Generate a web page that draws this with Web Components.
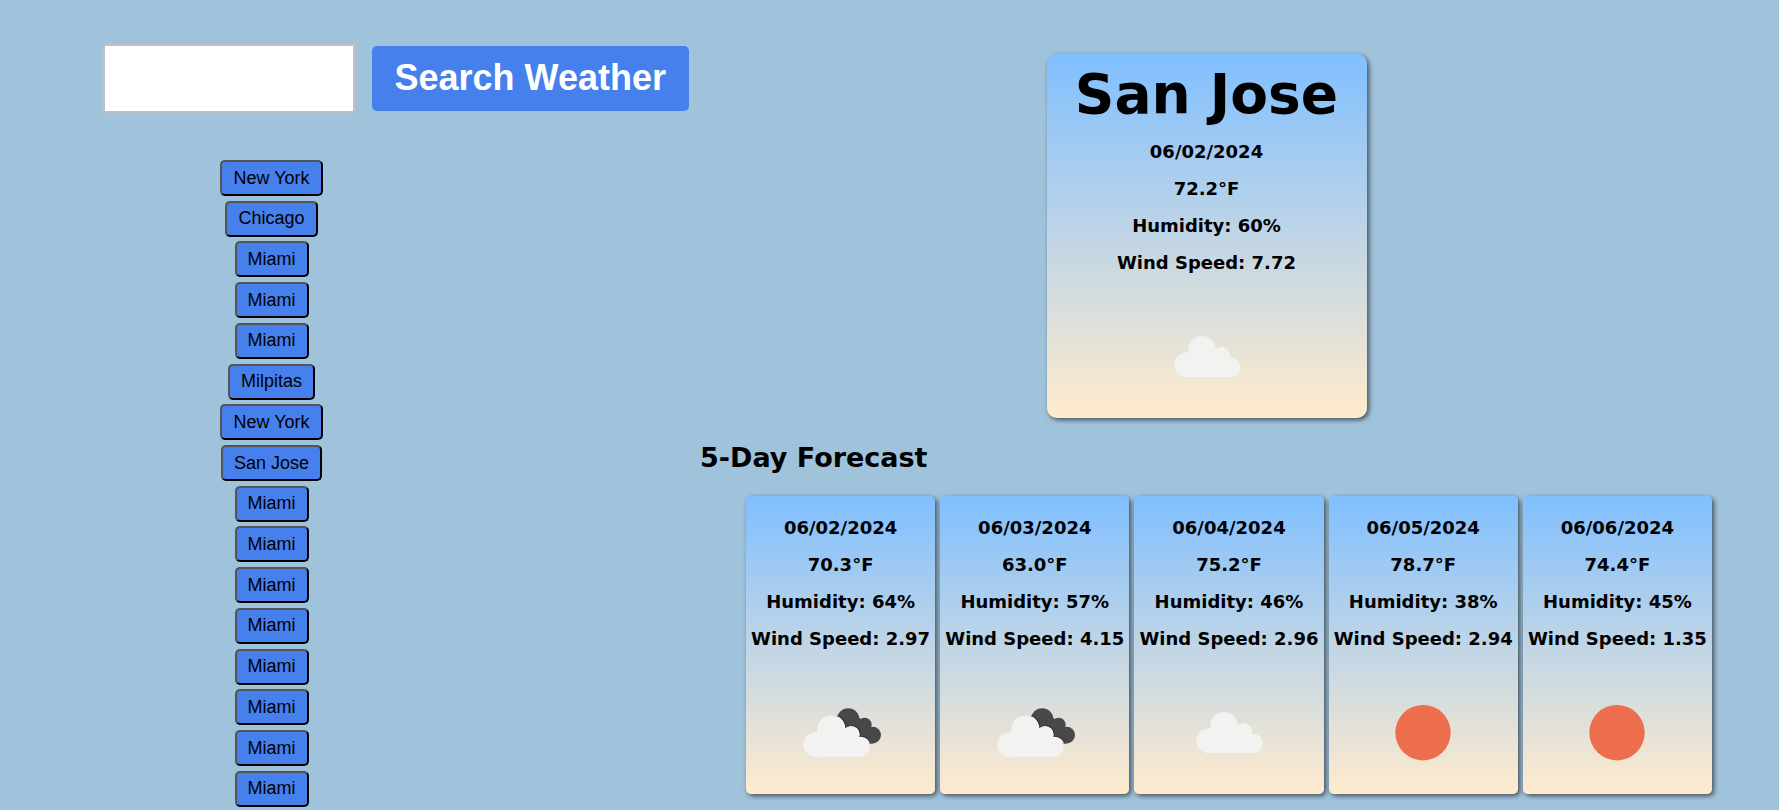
<!DOCTYPE html>
<html lang="en">
<head>
<meta charset="utf-8">
<meta name="viewport" content="width=device-width, initial-scale=1">
<title>Weather Dashboard</title>
<style>
  body { margin: 0; background: #a0c3dc; color: #000; font-family: Verdana, "DejaVu Sans", sans-serif; }
</style>
</head>
<body>
<weather-app></weather-app>
<script>
const CLOUD = `<circle cx="29.7" cy="57.8" r="12.3"/><circle cx="45" cy="42.8" r="13.8"/>
  <circle cx="64.5" cy="48.6" r="8.6"/><circle cx="74" cy="60.4" r="9.7"/>
  <path d="M29.7 70.1V50L45 42.8L64.5 46L70 55L74 60V70.1Z"/>`;
const DARK = `<circle cx="57.2" cy="36.4" r="11.2"/><circle cx="73.6" cy="41.8" r="7.1"/>
  <circle cx="81.7" cy="52.1" r="8.3"/><path d="M57 60.4V40L66 33L72 38L78 46L82 60.4Z"/>`;
const ICONS = {
  cloud: `<g fill="#f2f2f0">${CLOUD}</g>`,
  clouds: `<defs><clipPath id="back">${DARK}</clipPath></defs><g fill="#484849">${DARK}</g>
    <g clip-path="url(#back)"><g fill="#303031" transform="translate(-3.6 2.2)">${CLOUD}</g>
    <g fill="#fff" transform="translate(-4.4 3)">${CLOUD}</g></g>
    <g fill="#f2f2f0" transform="translate(-5 3.7)">${CLOUD}</g>`,
  sun: `<circle cx="50" cy="49.7" r="27.7" fill="#ec6e4c"/>`
};

function define(name, render) {
  customElements.define(name, class extends HTMLElement {
    connectedCallback() {
      if (this.shadowRoot) return;
      this.attachShadow({ mode: "open" }).innerHTML = render(this);
    }
  });
}

define("weather-icon", el => `<style>
  :host { display: block; width: 100px; height: 100px; }
  svg { display: block; width: 100%; height: 100%; }
</style>
<svg viewBox="0 0 100 100" role="img" aria-label="${el.getAttribute("kind")}">${ICONS[el.getAttribute("kind")]}</svg>`);

define("weather-card", el => `<style>
  :host { display: flex; flex-direction: column; align-items: center; box-sizing: border-box;
    padding: 13px 0 11px; border-radius: 5px;
    background: linear-gradient(#80bfff, #ffebcd); box-shadow: 2px 2px 5px rgba(0, 0, 0, .6); }
  :host([large]) { width: 320px; padding-top: 8px; border-radius: 10px; }
  p { margin: 0; font-size: 18px; line-height: 37px; font-weight: bold; white-space: nowrap; }
  weather-icon { margin-top: 26px; }
</style>
<slot></slot>
<p>${el.getAttribute("date")}</p>
<p>${el.getAttribute("temp")}°F</p>
<p>Humidity: ${el.getAttribute("humidity")}%</p>
<p>Wind Speed: ${el.getAttribute("wind")}</p>
<weather-icon kind="${el.getAttribute("icon")}"></weather-icon>`);

define("search-form", () => `<style>
  :host { display: block; }
  form { display: flex; align-items: center; gap: 17px; }
  input { box-sizing: border-box; flex: 1; min-width: 0; height: 69px; padding: 10px; margin: 0;
    border: 2px solid #c0c0c0; background: #fff; font: 36px "Liberation Sans", Arial, sans-serif; }
  button { height: 65px; margin: 0; padding: 0 23px 2px; border: 0; border-radius: 5px; background: #4580ed; color: #fff;
    font: bold 36px "Liberation Sans", Arial, sans-serif; }
</style>
<form onsubmit="return false"><input type="text" aria-label="City"><button type="submit">Search Weather</button></form>`);

define("city-button", () => `<style>
  :host { display: block; }
  button { display: block; height: 36px; margin: 0; padding: 0 11px; border: 2px outset #000; border-radius: 5px;
    background: #4580ed; color: #000; font: 18px "Liberation Sans", Arial, sans-serif; }
</style>
<button type="button"><slot></slot></button>`);

define("search-history", () => `<style>
  :host { display: flex; flex-direction: column; align-items: center; justify-content: space-between; }
</style>
<slot></slot>`);

define("five-day-forecast", () => `<style>
  :host { display: block; }
  h2 { margin: 0; font-size: 27px; line-height: 34px; }
  .days { display: grid; grid-template-columns: repeat(5, minmax(0, 1fr)); gap: 5px; padding: 0 1px 0 46px; margin-top: 21px; }
  @media (max-width: 1700px) {
    .days { grid-template-columns: repeat(auto-fit, minmax(189px, 1fr)); }
  }
</style>
<h2>5-Day Forecast</h2>
<div class="days"><slot></slot></div>`);

const cities = ["New York", "Chicago", "Miami", "Miami", "Miami", "Milpitas", "New York", "San Jose",
  "Miami", "Miami", "Miami", "Miami", "Miami", "Miami", "Miami", "Miami"];
const days = [
  ["06/02/2024", "70.3", 64, "2.97", "clouds"],
  ["06/03/2024", "63.0", 57, "4.15", "clouds"],
  ["06/04/2024", "75.2", 46, "2.96", "cloud"],
  ["06/05/2024", "78.7", 38, "2.94", "sun"],
  ["06/06/2024", "74.4", 45, "1.35", "sun"]
];

define("weather-app", () => `<style>
  :host { display: grid; grid-template-columns: 586px minmax(0, 1fr); column-gap: 11px; box-sizing: border-box;
    min-height: 100vh; padding: 44px 66px 3px 103px; }
  aside { display: flex; flex-direction: column; gap: 47px; }
  search-history { flex: 1; width: 337px; gap: 4px; }
  main { display: flex; flex-direction: column; gap: 23px; padding-top: 10px; }
  weather-card[large] { align-self: center; }
  h1 { margin: 0 0 7px; font-size: 55px; line-height: 64px; white-space: nowrap; }
  @media (max-width: 1150px) {
    :host { grid-template-columns: minmax(0, 1fr); padding: 24px; }
  }
</style>
<aside>
  <search-form></search-form>
  <search-history>${cities.map(c => `<city-button>${c}</city-button>`).join("")}</search-history>
</aside>
<main>
  <weather-card large date="06/02/2024" temp="72.2" humidity="60" wind="7.72" icon="cloud"><h1>San Jose</h1></weather-card>
  <five-day-forecast>${days.map(([d, t, h, w, i]) =>
    `<weather-card date="${d}" temp="${t}" humidity="${h}" wind="${w}" icon="${i}"></weather-card>`).join("")}</five-day-forecast>
</main>`);
</script>
</body>
</html>
